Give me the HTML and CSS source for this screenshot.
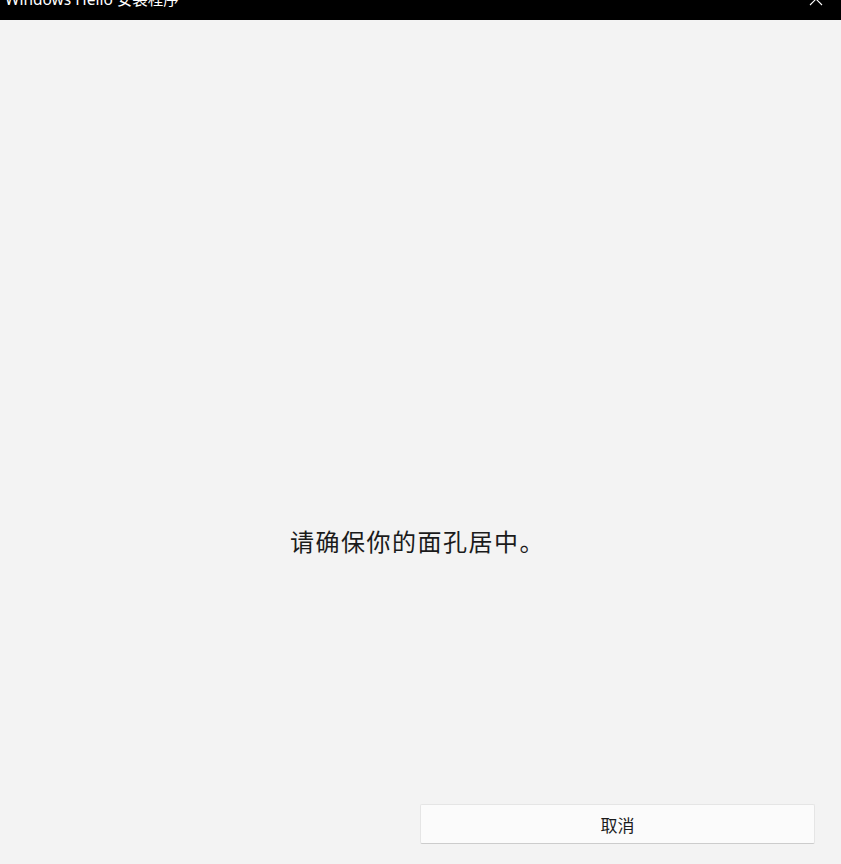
FILE: index.html
```html
<!DOCTYPE html>
<html lang="zh-CN">
<head>
  <meta charset="UTF-8" />
  <title>Windows Hello 安装程序</title>
  <link rel="stylesheet" href="styles.css">
</head>
<body>
  <header class="titlebar">
    <span class="title">Windows Hello 安装程序</span>
    <svg class="close" width="14" height="14" viewBox="0 0 14 14">
      <path d="M1 1 L13 13 M13 1 L1 13" stroke="#fff" stroke-width="1.1" fill="none"/>
    </svg>
  </header>

  <main class="content">
    <p class="message">请确保你的面孔居中。</p>
    <div class="actions">
      <button class="btn">取消</button>
    </div>
  </main>
</body>
</html>
```

FILE: styles.css
```css
:root {
  --bg: #f3f3f3;
  --text: #1b1b1b;
}

html, body {
  margin: 0;
  padding: 0;
  height: 100%;
}

body {
  background-color: var(--bg);
  font-family: "Noto Sans", "Noto Sans CJK SC", sans-serif;
  color: var(--text);
  overflow: hidden;
}

.titlebar {
  height: 20px;
  background-color: #000;
  display: flex;
  align-items: flex-start;
  overflow: hidden;
  padding: 0 18px 0 5px;
}

.title {
  color: #fff;
  font-size: 15.5px;
  line-height: 20px;
  margin-top: -11px;
  white-space: nowrap;
}

.close {
  margin-left: auto;
  margin-top: -8px;
}

.content {
  height: 844px;
  display: flex;
  flex-direction: column;
}

.message {
  margin: 505px 0 0 290px;
  font-family: "Noto Sans CJK SC", sans-serif;
  font-size: 24px;
  line-height: 32px;
  letter-spacing: 1.5px;
}

.actions {
  margin-top: auto;
  padding: 0 26px 20px 420px;
}

.btn {
  width: 100%;
  height: 40px;
  background-color: #fbfbfb;
  border: 1px solid #e5e5e5;
  border-bottom-color: #cccccc;
  border-radius: 2px;
  font-family: "Noto Sans CJK SC", sans-serif;
  font-size: 17px;
  color: var(--text);
  cursor: pointer;
}
```
